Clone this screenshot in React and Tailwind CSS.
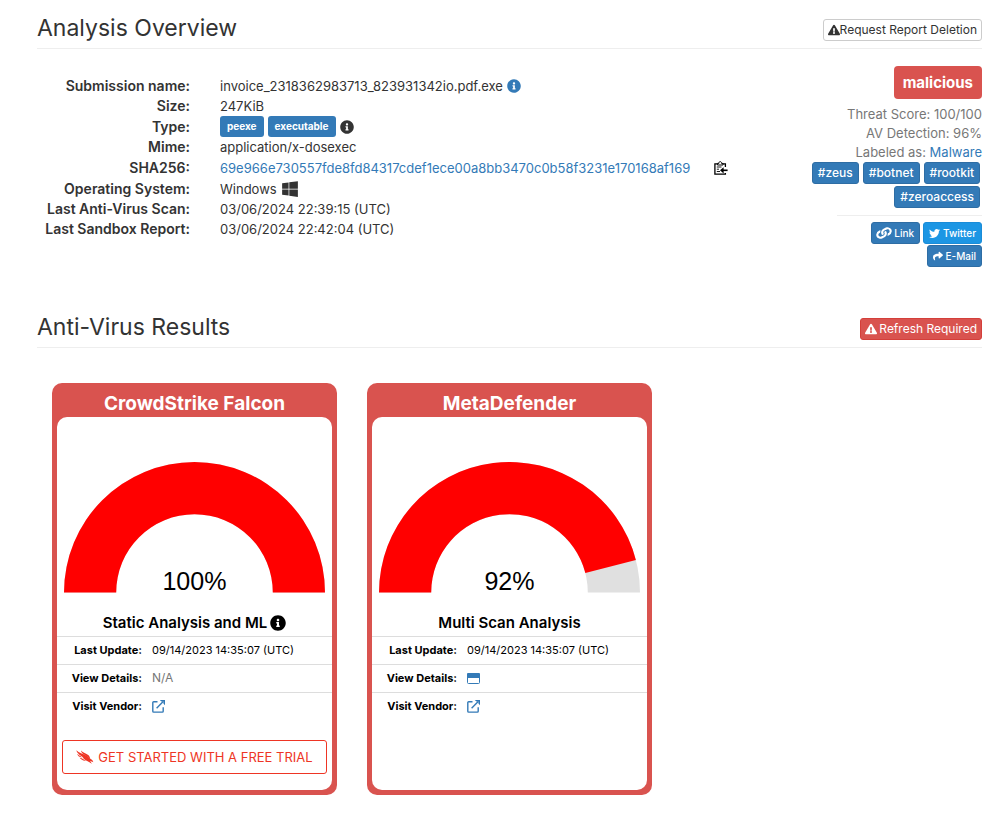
import React from "react";
import { FaInfoCircle, FaExclamationTriangle, FaWindows, FaLink, FaTwitter, FaShare } from "react-icons/fa";

function ClipboardIcon() {
  return (
    <svg viewBox="0 0 14 14" className="h-[14px] w-[14px]" fill="none" stroke="#000" strokeWidth="1.3">
      <path d="M11.4 6V2.8H0.9V13.2H11.4V12" />
      <path d="M3.4 4V2.4H4.8C4.8 0 7.6 0 7.6 2.4H9V4Z" fill="#fff" strokeWidth="1" />
      <path d="M2.8 6H7.5M2.8 8.2H5M2.8 10.5H6" strokeWidth="0.9" />
      <path d="M13.6 9.3H8.5" strokeWidth="1.6" />
      <path d="M9.6 6.2V12.4L6 9.3Z" fill="#000" stroke="none" />
    </svg>
  );
}

function WindowIcon() {
  return (
    <svg viewBox="0 0 13 11" className="h-[11px] w-[13px]">
      <rect x="0.5" y="0.5" width="12" height="10" rx="1" fill="#fff" stroke="#337ab7" />
      <path d="M0 5V1.2Q0 0 1.2 0H11.8Q13 0 13 1.2V5Z" fill="#337ab7" />
    </svg>
  );
}

function ExternalIcon() {
  return (
    <svg viewBox="0 0 13 13" className="h-[13px] w-[13px]" fill="none" stroke="#337ab7" strokeWidth="1.4">
      <path d="M5.5 1.7H1.7Q0.8 1.7 0.8 2.6V11.2Q0.8 12.1 1.7 12.1H10.3Q11.2 12.1 11.2 11.2V7.2" />
      <path d="M4.6 8.2L11.2 1.6" />
      <path d="M7.8 0H13V5.2L11.4 3.6V1.6H9.4Z" fill="#337ab7" stroke="none" />
    </svg>
  );
}

function FalconIcon() {
  return (
    <svg viewBox="0 0 18 14" className="h-[14px] w-[18px] shrink-0" fill="#ee3524">
      <path d="M0.3 0.3C3 3 6.8 3.8 10.2 5.6C13 7.1 13.4 8.4 14.6 9C16 9.6 16.9 10.6 17.3 12.2C16.2 11.3 15 11.2 13.8 11.2C15 11.9 15.4 12.7 15.5 13.9C13.6 11.2 10.6 11.3 8.6 9.4C7.4 8.3 6.9 7 5.2 5.9C2.6 4.3 1 2.7 0.3 0.3Z" />
      <path d="M5 0.4C7 2.6 10.2 3.2 12.2 4.9C13.5 6 13.9 7.3 14.2 8.9C12.4 6.8 10.2 5.8 8 4.4C6.3 3.3 5.3 2.1 5 0.4Z" />
      <path d="M1.2 3.8C2.6 5.4 4.8 6 6 7.4C5 7 3.6 7 2.6 6.2C1.8 5.6 1.4 4.8 1.2 3.8Z" />
      <path d="M3.6 7.4C5 8 6.4 8.2 7.4 9.2C8.2 10.1 9.4 10.6 10.8 11C8.6 11.2 6.8 10.7 5.6 9.6C4.8 8.9 4.2 8.2 3.6 7.4Z" />
    </svg>
  );
}

function SectionHeader({ title, children }) {
  return (
    <header className="flex items-end justify-between border-b border-[#eeeeee] pt-[15px] pb-[7px]">
      <h2 className="text-[23px] leading-[26px] font-normal">{title}</h2>
      {children}
    </header>
  );
}

function Row({ label, tall, children }) {
  return (
    <div className={`flex items-center gap-[30px] ${tall ? "h-[21px]" : "h-5"}`}>
      <dt className="w-[153px] shrink-0 text-right text-[14px] font-semibold">{label}:</dt>
      <dd className="flex items-center gap-1">{children}</dd>
    </div>
  );
}

function TypeLabel({ children }) {
  return <span className="rounded-[3px] bg-[#337ab7] px-[7px] text-[10px] leading-[21px] font-bold text-white">{children}</span>;
}

function Tag({ children }) {
  return (
    <a href="#tag" className="rounded-[3px] border border-[#2e6da4] bg-[#337ab7] px-[5px] text-[12px] leading-5 font-medium text-white">
      {children}
    </a>
  );
}

function ShareButton({ icon, color, children }) {
  return (
    <button type="button" className={`flex h-[22px] items-center gap-[3px] rounded-[3px] border px-[5px] text-[10px] font-medium text-white ${color}`}>
      {icon}
      {children}
    </button>
  );
}

function Gauge({ value }) {
  const end = Math.PI * (1 - value / 100);
  const at = (r) => `${130 + r * Math.cos(end)} ${130 - r * Math.sin(end)}`;
  return (
    <svg viewBox="0 0 260 140" className="w-full" role="img" aria-label={`${value}%`}>
      <path d="M0 130A130 130 0 0 1 260 130H208A78 78 0 0 0 52 130Z" fill="#e0e0e0" />
      <path d={`M0 130A130 130 0 0 1 ${at(130)}L${at(78)}A78 78 0 0 0 52 130Z`} fill="#ff0000" />
      <text x="130" y="128" textAnchor="middle" fontSize="25" className="font-['Liberation_Sans',Arial,sans-serif]">
        {value}%
      </text>
    </svg>
  );
}

function Detail({ label, children }) {
  return (
    <tr className="h-7 border-t border-[#dddddd]">
      <th scope="row" className="w-[85px] text-right font-bold">{label}:</th>
      <td className="pl-[10px]">
        <div className="flex items-center">{children}</div>
      </td>
    </tr>
  );
}

function VendorCard({ name, value, analysis, info, details, trial }) {
  return (
    <article className="flex min-h-[412px] w-full max-w-[285px] flex-col rounded-[10px] bg-[#d9534f] px-[5px] pb-[5px] text-black">
      <h3 className="pt-[7px] text-center text-[19px] leading-[27px] font-bold text-white">{name}</h3>
      <div className="flex flex-1 flex-col rounded-[10px] bg-white">
        <div className="px-[7px] pt-[45px]">
          <Gauge value={value} />
        </div>
        <h4 className="mt-2 mb-[1px] flex h-6 items-center justify-center gap-[3px] text-[15px] font-semibold">
          {analysis}
          {info && <FaInfoCircle size={16} />}
        </h4>
        <table className="w-full text-[11px]">
          <tbody>
            <Detail label="Last Update">09/14/2023 14:35:07 (UTC)</Detail>
            <Detail label="View Details">{details}</Detail>
            <Detail label="Visit Vendor">
              <a href="#vendor" aria-label="Visit vendor"><ExternalIcon /></a>
            </Detail>
          </tbody>
        </table>
        {trial && (
          <a href="#trial" className="mx-[5px] mt-5 flex h-[34px] items-center justify-center gap-1 rounded-[3px] border border-[#ee3524] text-[13px] whitespace-nowrap text-[#ee3524]">
            <FalconIcon />
            GET STARTED WITH A FREE TRIAL
          </a>
        )}
      </div>
    </article>
  );
}

export default function App() {
  return (
    <main className="bg-white pr-[21px] pb-6 pl-[37px] font-['Inter',sans-serif] text-[13px] leading-5 text-[#333333]">
      <section>
        <SectionHeader title="Analysis Overview">
          <button type="button" className="flex h-[22px] items-center rounded-[3px] border border-[#cccccc] bg-white px-1 text-[12px]">
            <FaExclamationTriangle size={12} />
            Request Report Deletion
          </button>
        </SectionHeader>
        <div className="flex justify-between pt-[17px]">
          <dl className="mt-[9px]">
            <Row label="Submission name" tall>
              invoice_2318362983713_823931342io.pdf.exe
              <FaInfoCircle size={14} className="text-[#337ab7]" />
            </Row>
            <Row label="Size">247KiB</Row>
            <Row label="Type" tall>
              <TypeLabel>peexe</TypeLabel>
              <TypeLabel>executable</TypeLabel>
              <FaInfoCircle size={14} />
            </Row>
            <Row label="Mime">application/x-dosexec</Row>
            <Row label="SHA256" tall>
              <a href="#sha256" className="text-[#337ab7]">69e966e730557fde8fd84317cdef1ece00a8bb3470c0b58f3231e170168af169</a>
              <button type="button" aria-label="Copy hash" className="ml-5"><ClipboardIcon /></button>
            </Row>
            <Row label="Operating System" tall>Windows<FaWindows size={18} /></Row>
            <Row label="Last Anti-Virus Scan">03/06/2024 22:39:15 (UTC)</Row>
            <Row label="Last Sandbox Report">03/06/2024 22:42:04 (UTC)</Row>
          </dl>
          <aside className="flex w-[180px] shrink-0 flex-col items-end">
            <strong className="rounded-[4px] bg-[#d9534f] px-[9px] text-[15px] leading-[33px] font-bold text-white">malicious</strong>
            <div className="mt-[6px] text-right text-[13px] leading-[19px] text-[#777777]">
              <p>Threat Score: 100/100</p>
              <p>AV Detection: 96%</p>
              <p>Labeled as: <a href="#malware" className="text-[#337ab7]">Malware</a></p>
            </div>
            <div className="flex flex-wrap justify-end gap-x-1 gap-y-[2px] pr-[2px]">
              <Tag>#zeus</Tag>
              <Tag>#botnet</Tag>
              <Tag>#rootkit</Tag>
              <Tag>#zeroaccess</Tag>
            </div>
            <div className="mt-[7px] flex w-[145px] flex-wrap justify-end gap-x-[3px] gap-y-[1px] border-t border-[#eeeeee] pt-[6px]">
              <ShareButton icon={<FaLink size={14} className="rotate-[20deg]" />} color="border-[#2e6da4] bg-[#337ab7]">Link</ShareButton>
              <ShareButton icon={<FaTwitter size={11} />} color="border-[#1a8cd8] bg-[#1c96e4]">Twitter</ShareButton>
              <ShareButton icon={<FaShare size={10} />} color="border-[#2e6da4] bg-[#337ab7]">E-Mail</ShareButton>
            </div>
          </aside>
        </div>
      </section>
      <section className="mt-8">
        <SectionHeader title="Anti-Virus Results">
          <button type="button" className="flex h-[22px] items-center gap-[2px] rounded-[3px] border border-[#d43f3a] bg-[#d9534f] px-1 text-[12px] text-white">
            <FaExclamationTriangle size={12} />
            Refresh Required
          </button>
        </SectionHeader>
        <div className="mt-[35px] grid grid-cols-3 gap-[30px] px-[15px]">
          <VendorCard
            name="CrowdStrike Falcon"
            value={100}
            analysis="Static Analysis and ML"
            info
            details={<span className="text-[12px] text-[#777777]">N/A</span>}
            trial
          />
          <VendorCard
            name="MetaDefender"
            value={92}
            analysis="Multi Scan Analysis"
            details={<a href="#details" aria-label="View details"><WindowIcon /></a>}
          />
        </div>
      </section>
    </main>
  );
}
